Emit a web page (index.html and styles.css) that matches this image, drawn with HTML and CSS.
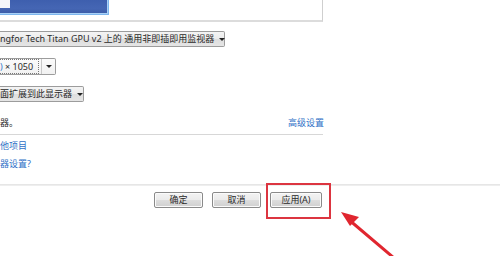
FILE: index.html
```html
<!DOCTYPE html>
<html lang="zh">
<head>
<meta charset="utf-8">
<link rel="stylesheet" href="styles.css">
</head>
<body>
<div class="page">
  <div class="preview">
    <div class="monitor"><div class="monitor-tag"></div></div>
  </div>
  <div class="form">
    <div class="select select-monitor"><span class="select-text">ngfor Tech Titan GPU v2 上的 通用非即插即用监视器</span><span class="caret"></span></div>
    <div class="select select-res"><span class="select-text focus"><span class="hl">)</span> × 1050</span><span class="sep"></span><span class="caret"></span></div>
    <div class="select select-multi"><span class="select-text">面扩展到此显示器</span><span class="caret"></span></div>
    <div class="note-row">
      <span class="note">器。</span>
      <a class="link">高级设置</a>
    </div>
    <div class="rule"></div>
    <a class="link link-row">他项目</a>
    <a class="link link-row">器设置?</a>
  </div>
  <div class="rule rule-full"></div>
  <div class="buttons">
    <button class="btn">确定</button>
    <button class="btn">取消</button>
    <button class="btn">应用(A)</button>
  </div>
  <div class="callout"></div>
  <svg class="arrow" width="500" height="256" viewBox="0 0 500 256">
    <line x1="394" y1="258" x2="348" y2="219" stroke="#e0262f" stroke-width="3" stroke-linecap="round"/>
    <polygon points="341,212 359,217 350,226" fill="#e0262f"/>
  </svg>
</div>
</body>
</html>
```
FILE: styles.css
```css
html, body {
  margin: 0;
  padding: 0;
  background: #ffffff;
}
.page {
  position: relative;
  width: 500px;
  height: 256px;
  overflow: hidden;
  font-family: "Noto Sans", "Noto Sans CJK SC", sans-serif;
  font-size: 9px;
  color: #2a2a2a;
}
.preview {
  width: 322px;
  height: 20px;
  border-right: 1px solid #cfcfcf;
  border-bottom: 2px solid #dcdcdc;
  box-sizing: content-box;
}
.monitor {
  width: 108px;
  height: 14px;
  background: linear-gradient(180deg, #3e5fae 0%, #4566b4 60%, #3a5aa6 100%);
  border: 1px solid #7db6ee;
  border-top: none;
  border-left: none;
  box-shadow: inset -1px -1px 0 #a8d0f6;
}
.monitor-tag {
  width: 10px;
  height: 8px;
  background: #f4f6fa;
}
.form {
  width: 324px;
  display: flex;
  flex-direction: column;
  align-items: flex-start;
  padding-top: 9px;
}
.select {
  display: flex;
  align-items: center;
  height: 16px;
  box-sizing: border-box;
  border: 1px solid #9c9c9c;
  border-left: none;
  border-radius: 0 2px 2px 0;
  background: linear-gradient(180deg, #f4f4f4 0%, #ebebeb 50%, #dddddd 51%, #e5e5e5 100%);
  margin-bottom: 11px;
  white-space: nowrap;
  line-height: 14px;
}
.caret {
  flex: none;
  width: 0;
  height: 0;
  border-left: 3px solid transparent;
  border-right: 3px solid transparent;
  border-top: 3px solid #222;
  margin: 0 4px 0 5px;
}
.select-monitor {
  width: 225px;
  justify-content: space-between;
}
.select-res {
  width: 56px;
  height: 17px;
  background: linear-gradient(180deg, #fbfbfb 0%, #f1f1f1 100%);
}
.select-res .focus {
  flex: 1;
  height: 13px;
  line-height: 13px;
  border: 1px dotted #777;
  border-left: none;
}
.hl {
  color: #3a78c8;
}
.sep {
  flex: none;
  width: 1px;
  height: 15px;
  background: #c8c8c8;
  margin-left: 2px;
}
.select-res .caret {
  margin: 0 3px 0 4px;
}
.select-multi {
  width: 84px;
  justify-content: space-between;
}
.note-row {
  width: 324px;
  display: flex;
  justify-content: space-between;
  align-items: center;
  margin-top: 2px;
  height: 14px;
}
.link {
  color: #2e6fc6;
  cursor: pointer;
}
.rule {
  width: 323px;
  height: 1px;
  background: #d7d7d7;
  margin-top: 5px;
}
.link-row {
  display: block;
  margin-top: 5px;
  height: 12px;
  line-height: 12px;
}
.link-row + .link-row {
  margin-top: 6px;
}
.rule-full {
  width: 500px;
  margin-top: 14px;
  height: 2px;
  background: linear-gradient(180deg, #e2e2e2, #f2f2f2);
}
.buttons {
  display: flex;
  gap: 9px;
  padding-left: 154px;
  margin-top: 6px;
}
.btn {
  width: 49px;
  height: 16px;
  padding: 0;
  font-family: inherit;
  font-size: 9px;
  line-height: 14px;
  color: #2a2a2a;
  border: 1px solid #8a8a8a;
  border-radius: 2px;
  background: linear-gradient(180deg, #f3f3f3 0%, #ebebeb 50%, #dddddd 51%, #d0d0d0 100%);
  box-shadow: inset 0 0 0 1px #fbfbfb;
}
.btn:last-child {
  width: 52px;
}
.callout {
  position: absolute;
  left: 266px;
  top: 183px;
  width: 65px;
  height: 36px;
  box-sizing: border-box;
  border: 2px solid #dc3540;
}
.arrow {
  position: absolute;
  left: 0;
  top: 0;
}
```
